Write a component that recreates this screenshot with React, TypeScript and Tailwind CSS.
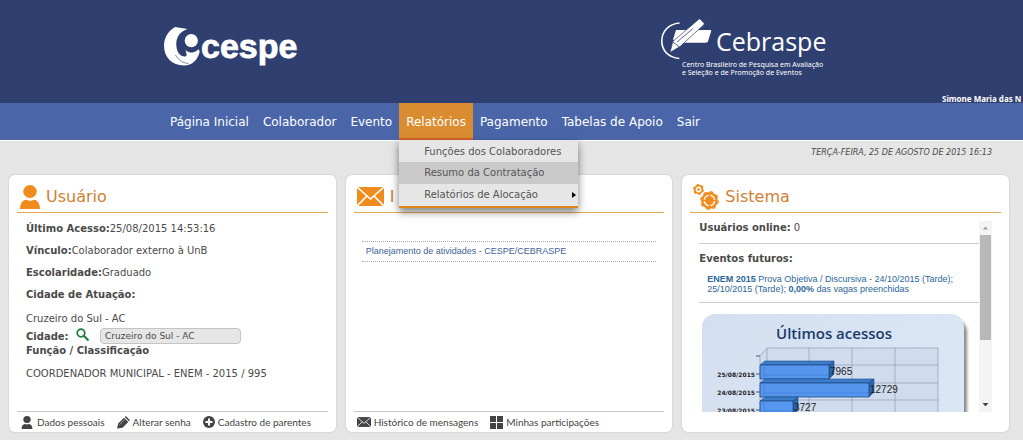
import type { ReactNode } from 'react';

const menu = ['Página Inicial', 'Colaborador', 'Evento', 'Relatórios', 'Pagamento', 'Tabelas de Apoio', 'Sair'];

const accesses = [
  { date: '25/08/2015', value: '7965', width: 69, y: 52 },
  { date: '24/08/2015', value: '12729', width: 109, y: 70 },
  { date: '23/08/2015', value: '3727', width: 33, y: 88 },
];

function PersonIcon({ className }: { className: string }) {
  return (
    <svg viewBox="0 0 20 24" className={className} fill="currentColor" aria-hidden="true">
      <ellipse cx="10" cy="6.500" rx="6.800" ry="6.500" />
      <path d="M0 24c0-5 2.500-9 6-9.200 2.500 1.200 5.500 1.200 8 0 3.500.2 6 4.200 6 9.200z" />
    </svg>
  );
}

function MailIcon({ className }: { className: string }) {
  return (
    <svg viewBox="0 0 27 19" className={className} aria-hidden="true">
      <path d="M0 0h27v19H0z" fill="currentColor" />
      <path d="M0 0l13.500 12L27 0M0 19l10-10M27 19L17 9" fill="none" stroke="#fff" strokeWidth="1.600" />
    </svg>
  );
}

function GearsIcon() {
  return (
    <svg viewBox="0 0 26 26" className="h-[26px] w-[26px]" fill="none" stroke="currentColor" aria-hidden="true">
      <circle cx="5.500" cy="5.500" r="3.800" strokeWidth="1.800" />
      <circle cx="5.500" cy="5.500" r="4.900" strokeWidth="1.200" strokeDasharray="2.560 2.560" />
      <circle cx="5.500" cy="5.500" r="1.300" fill="currentColor" stroke="none" />
      <circle cx="16.500" cy="16.500" r="7.200" strokeWidth="2.400" />
      <circle cx="16.500" cy="16.500" r="8.700" strokeWidth="1.400" strokeDasharray="3.420 3.420" />
      <circle cx="16.500" cy="16.500" r="4.500" fill="currentColor" stroke="none" />
      <path d="M16.500 10v13M10 16.500h13" strokeWidth="1.500" />
    </svg>
  );
}

function PencilIcon() {
  return (
    <svg viewBox="0 0 14 14" className="h-[13px] w-[13px]" fill="currentColor" aria-hidden="true">
      <path d="M0 13.500l1.300-5.500L7.500 1.800l4.700 4.700-6.200 6.200z" />
      <path d="M8.300 1L9.500 0 14 4.500l-1.200 1.200z" />
      <path d="M2.500 9.500l5.500-5.500" stroke="#fff" strokeWidth=".5" />
    </svg>
  );
}

function PlusIcon() {
  return (
    <svg viewBox="0 0 12 12" className="h-3 w-3" aria-hidden="true">
      <circle cx="6" cy="6" r="6" fill="currentColor" />
      <path d="M6 2.500v7M2.500 6h7" stroke="#fff" strokeWidth="2" />
    </svg>
  );
}

function TilesIcon() {
  return (
    <svg viewBox="0 0 13 13" className="h-[13px] w-[13px]" fill="currentColor" aria-hidden="true">
      <path d="M0 0h6v6H0zM7 0h6v6H7zM0 7h6v6H0zM7 7h6v6H7z" />
    </svg>
  );
}

function CespeLogo() {
  return (
    <svg viewBox="0 0 134 40" className="h-10 w-[134px]" fill="#fff" role="img" aria-label="cespe">
      <path d="M11 0l12.500 2C15 5 12 11 12.300 18c.3 7 3.700 11.500 8.700 11.500 2 0 2-1.500.5-6.500 4.500 4 10 3 13-1l1.200 2.500C34 32.500 28.500 38.500 20 38.500 8 38.500 0 30 0 19 0 11 4 4 11 0z" />
      <circle cx="27.300" cy="13.700" r="6.600" />
      <path d="M11.500 28c3 5 7 8 13 8.500" fill="none" stroke="#2f3f70" strokeWidth=".6" />
      <text x="37" y="31" fontFamily="Liberation Sans" fontWeight="700" fontSize="34" stroke="#fff" strokeWidth=".8">cespe</text>
    </svg>
  );
}

function CebraspeLogo() {
  return (
    <svg viewBox="0 0 168 60" className="h-[60px] w-[168px]" fill="#fff" role="img" aria-label="Cebraspe">
      <path d="M19.500 5C8 6 1.800 14 1.800 23s6 16.500 17.500 17.500" fill="none" stroke="#fff" strokeWidth="1.600" />
      {/* Book */}
      <path d="M16 12h34c1 0 1.400.7 1.100 1.600l-3 9.400c-.4 1.200-1.200 1.700-2.400 1.700H22l-9-3z" />
      {/* Pen */}
      <path d="M10 34.500l2.800-11L38.500 1.500c1-.8 1.600-.6 2.300.2l3 3.300c.6.700.5 1.300-.2 2L20 28.500z" stroke="#2f3f70" strokeWidth=".7" />
      <path d="M13 24l6.500 5M17 24L33 10.500" fill="none" stroke="#2f3f70" strokeWidth=".8" />
      <text x="56" y="33" fontFamily="Open Sans" fontWeight="500" fontSize="25">Cebraspe</text>
      <text x="22" y="49" fontFamily="Noto Sans" fontSize="7">Centro Brasileiro de Pesquisa em Avaliação</text>
      <text x="22" y="57" fontFamily="Noto Sans" fontSize="7">e Seleção e de Promoção de Eventos</text>
    </svg>
  );
}

function AccessChart() {
  return (
    <svg viewBox="0 0 280 99" className="h-[99px] w-[280px] max-w-none" role="img" aria-label="Últimos acessos">
      <defs>
        <linearGradient id="panel" x1="0" y1="0" x2="1" y2="0.400">
          <stop offset="0" stopColor="#d3dff0" />
          <stop offset="1" stopColor="#dbe6f5" />
        </linearGradient>
        <filter id="soft">
          <feGaussianBlur stdDeviation="1.500" />
        </filter>
      </defs>
      <rect x="8" y="6" width="260" height="120" rx="13" fill="#8b8b8b" filter="url(#soft)" />
      <rect x="3" y="1" width="262" height="120" rx="13" fill="url(#panel)" />
      <text x="135" y="26" textAnchor="middle" fontFamily="Open Sans" fontWeight="600" fontSize="15" fill="#1a3b69">
        Últimos acessos
      </text>
      <path d="M61 43l7-8h171v80H61z" fill="#cfdcee" />
      <path d="M61 99V43l7-8v64M68 35h171v64M110 35v64M153 35v64M196 35v64M68 52h171M68 70h171M68 87h171" fill="none" stroke="#8f9bb0" strokeWidth=".7" />
      {accesses.map((a) => (
        <g key={a.date}>
          <text x="56" y={a.y + 12} textAnchor="end" fontFamily="DejaVu Sans" fontWeight="700" fontSize="6" fill="#222">
            {a.date}
          </text>
          <path d={`M57 ${a.y + 9}h4`} stroke="#333" strokeWidth=".8" />
          <path d={`M61 ${a.y}l5-4h${a.width}l-5 4z`} fill="#3c7dcb" stroke="#1f4a83" strokeWidth=".6" />
          <path d={`M${61 + a.width} ${a.y}l5-4v13l-5 5z`} fill="#2b64a8" stroke="#1f4a83" strokeWidth=".6" />
          <path d={`M61 ${a.y}h${a.width}v14h-${a.width}z`} fill="#5596ef" stroke="#1f4a83" strokeWidth=".8" />
          <path d={`M65 ${a.y + 10}h${a.width - 5}M65 ${a.y}v14`} stroke="#3f7fd6" strokeWidth=".7" />
          <text x={62 + a.width} y={a.y + 10} fontFamily="Liberation Sans" fontSize="10" fill="#222">
            {a.value}
          </text>
        </g>
      ))}
      <path d="M57 43h4" stroke="#333" strokeWidth=".8" />
    </svg>
  );
}

function Card({ title, icon, children, footer }: { title: string; icon: ReactNode; children: ReactNode; footer?: ReactNode }) {
  return (
    <section className="flex h-[257px] flex-col rounded-md bg-white px-2 shadow-[0_0_2px_#bbb]">
      <div className="flex h-[38px] shrink-0 items-center gap-[6px] border-b border-[#e3a857] px-[3px] pt-[6px] text-[#f08c1e]">
        {icon}
        <h2 className="text-[16px] leading-6 text-[#cf7f33]">{title}</h2>
      </div>
      <div className="min-h-0 flex-1">{children}</div>
      {footer && <div className="flex h-[21px] shrink-0 items-center gap-3 border-t border-[#c8c8c8] px-[3px] text-[#444]">{footer}</div>}
    </section>
  );
}

function FooterLink({ icon, children }: { icon: ReactNode; children: ReactNode }) {
  return (
    <a href="#" className="flex items-center gap-[3px] whitespace-nowrap font-['Lato',sans-serif] text-[10px]">
      {icon}
      <span>{children}</span>
    </a>
  );
}

export default function App() {
  return (
    <div className="min-h-[440px] overflow-hidden bg-[#e5e5e5] font-['DejaVu_Sans',sans-serif] text-[#4a4a4a]">
      <header className="flex h-[103px] flex-col bg-[#2f3f70]">
        <div className="flex flex-1 items-start pl-[164px]">
          <div className="pt-[27px]">
            <CespeLogo />
          </div>
          <div className="pl-[362px] pt-[18px]">
            <CebraspeLogo />
          </div>
        </div>
        <p className="ml-auto w-[81px] overflow-hidden whitespace-nowrap font-['Noto_Sans',sans-serif] text-[8px] font-bold leading-[9px] text-white">
          Simone Maria das N
        </p>
      </header>

      <nav className="flex h-[38px] border-b border-white bg-[#4a66a9] pl-[163px] text-[12px] text-white">
        {menu.map((item) =>
          item === 'Relatórios' ? (
            <div key={item} className="relative flex">
              <a href="#" className="flex items-center border-b-2 border-[#d9622b] bg-[#d98d30] px-[7px] pt-[2px]">{item}</a>
              {/* Submenu */}
              <ul className="absolute left-0 top-[37px] z-10 w-[179px] border-b-2 border-[#e0861d] bg-[#e6e6e6] pt-px text-[10px] text-[#555] shadow-[0_4px_8px_rgba(0,0,0,0.5)]">
                <li><a href="#" className="block pl-[25px] leading-[21px]">Funções dos Colaboradores</a></li>
                <li><a href="#" className="block bg-[#c9c9c9] pl-[25px] leading-[22px]">Resumo da Contratação</a></li>
                <li>
                  <a href="#" className="flex items-center justify-between pl-[25px] pr-[2px] leading-[22px]">
                    Relatórios de Alocação
                    <svg viewBox="0 0 4 6" className="h-[6px] w-1"><path d="M0 0l4 3-4 3z" fill="#000" /></svg>
                  </a>
                </li>
              </ul>
            </div>
          ) : (
            <a key={item} href="#" className="flex items-center px-[7px]">{item}</a>
          ),
        )}
      </nav>

      <p className="h-[34px] pr-[31px] pt-1 text-right text-[8px] italic leading-4">TERÇA-FEIRA, 25 DE AGOSTO DE 2015 16:13</p>

      <main className="grid grid-cols-3 gap-[10px] pl-[9px] pr-[14px] pb-2">
        {/* Usuário */}
        <Card
          title="Usuário"
          icon={<PersonIcon className="h-6 w-5" />}
          footer={
            <>
              <FooterLink icon={<PersonIcon className="h-[13px] w-[14px]" />}>Dados pessoais</FooterLink>
              <FooterLink icon={<PencilIcon />}>Alterar senha</FooterLink>
              <FooterLink icon={<PlusIcon />}>Cadastro de parentes</FooterLink>
            </>
          }
        >
          <div className="px-[9px] pt-[5px] text-[10px]">
            <p className="leading-[22px]"><b>Último Acesso:</b>25/08/2015 14:53:16</p>
            <p className="leading-[22px]"><b>Vínculo:</b>Colaborador externo à UnB</p>
            <p className="leading-[22px]"><b>Escolaridade:</b>Graduado</p>
            <p className="leading-[22px]"><b>Cidade de Atuação:</b></p>
            <p className="pt-1 leading-[18px]">Cruzeiro do Sul - AC</p>
            <div className="flex h-4 items-center">
              <label htmlFor="cidade" className="w-[50px] font-bold">Cidade:</label>
              <button type="button" aria-label="Buscar" className="w-6 pb-1">
                <svg viewBox="0 0 13 13" className="h-[13px] w-[13px]" fill="none" stroke="#1d7f3f" strokeWidth="1.700">
                  <circle cx="5" cy="5" r="3.800" />
                  <path d="M8 8l4.500 4.500" strokeWidth="2.200" />
                </svg>
              </button>
              <input id="cidade" readOnly value="Cruzeiro do Sul - AC" className="h-4 w-[141px] rounded border border-[#c4c4c4] bg-[#e6e6e6] px-1 text-[9px]" />
            </div>
            <p className="leading-[14px]"><b>Função / Classificação</b></p>
            <p className="pt-1 leading-6">COORDENADOR MUNICIPAL - ENEM - 2015 / 995</p>
          </div>
        </Card>

        {/* Mensagens */}
        <Card
          title="I"
          icon={<MailIcon className="h-[19px] w-[27px]" />}
          footer={
            <>
              <FooterLink icon={<MailIcon className="h-[10px] w-[14px]" />}>Histórico de mensagens</FooterLink>
              <FooterLink icon={<TilesIcon />}>Minhas participações</FooterLink>
            </>
          }
        >
          <div className="px-2 pt-7">
            <a href="#" className="block border-y border-dotted border-[#aaa] px-1 font-['Liberation_Sans',sans-serif] text-[9px] leading-[19px] text-[#3f5f96]">
              Planejamento de atividades - CESPE/CEBRASPE
            </a>
          </div>
        </Card>

        {/* Sistema */}
        <Card title="Sistema" icon={<GearsIcon />}>
          <div className="flex h-[199px] pl-[9px] pr-[9px] pt-2">
            <div className="min-w-0 flex-1 overflow-hidden text-[10px]">
              <p className="border-b border-[#ccc] pb-2 leading-[14px]"><b>Usuários online:</b> 0</p>
              <div className="border-b border-[#ccc] pb-2 pt-2">
                <p className="leading-[14px]"><b>Eventos futuros:</b></p>
                <p className="whitespace-nowrap pl-2 pt-2 font-['Liberation_Sans',sans-serif] text-[9px] leading-[10px] text-[#2c6698]">
                  <b>ENEM 2015</b> Prova Objetiva / Discursiva - 24/10/2015 (Tarde);
                  <br />
                  25/10/2015 (Tarde); <b>0,00%</b> das vagas preenchidas
                </p>
              </div>
              <div className="pt-[10px]">
                <AccessChart />
              </div>
            </div>
            {/* Scrollbar */}
            <div className="flex w-[13px] shrink-0 flex-col bg-[#f4f4f4]">
              <svg viewBox="0 0 13 14" className="h-[14px] w-[13px]"><path d="M4 8.500l2.500-3 2.500 3z" fill="#999" /></svg>
              <div className="mx-px h-[105px] bg-[#b8b8b8]" />
              <svg viewBox="0 0 13 14" className="mt-auto h-[14px] w-[13px]"><path d="M3.500 5l3 3.500 3-3.500z" fill="#444" /></svg>
            </div>
          </div>
        </Card>
      </main>
    </div>
  );
}
